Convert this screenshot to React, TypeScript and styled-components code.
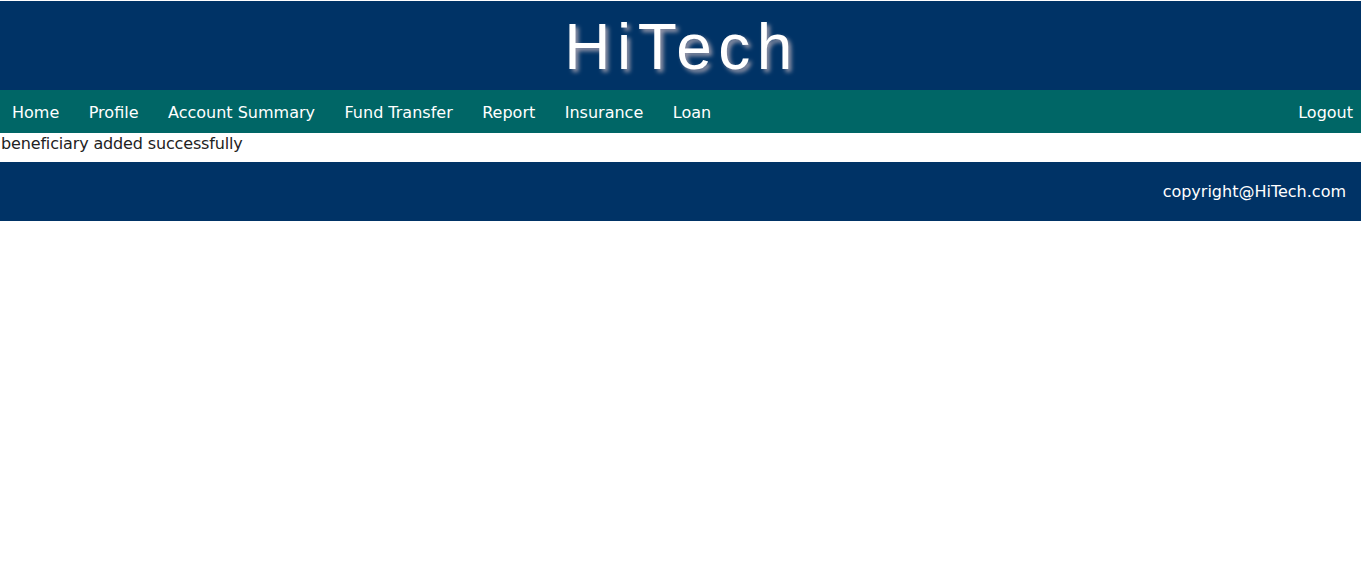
import styled, { createGlobalStyle } from "styled-components";

const GlobalStyle = createGlobalStyle`
  body {
    margin: 0;
    font-family: "DejaVu Sans", Verdana, sans-serif;
    background: white;
  }
`;

const Page = styled.div`
  padding-top: 1px;
`;

const Header = styled.header`
  background-color: #003366;
  height: 89px;
  display: flex;
  align-items: center;
  justify-content: center;
`;

const Title = styled.h1`
  margin: 0 0 0 2px;
  font-family: "Liberation Sans", Arial, sans-serif;
  font-weight: normal;
  font-size: 64px;
  letter-spacing: 6.5px;
  color: white;
  text-shadow: 3px 3px 4px #9999aa;
  position: relative;
  top: 1px;
`;

const NavBar = styled.nav`
  background-color: #006666;
  height: 43px;
  display: flex;
  align-items: center;
`;

const NavLink = styled.a<{ $right?: boolean }>`
  color: white;
  text-decoration: none;
  font-size: 16px;
  padding-left: ${props => (props.$right ? "14px" : "12px")};
  padding-right: ${props => (props.$right ? "8px" : "17.5px")};
  margin-left: ${props => (props.$right ? "auto" : "0")};
  cursor: pointer;
  position: relative;
  top: 1px;
`;

const Message = styled.div`
  height: 29px;
  font-size: 16px;
  letter-spacing: -0.15px;
  color: #222;
  padding-left: 1px;
  line-height: 22px;
`;

const Footer = styled.footer`
  background-color: #003366;
  height: 59px;
  display: flex;
  align-items: center;
  justify-content: flex-end;
  padding-right: 15px;
  color: white;
  font-size: 16px;
`;

const links = ["Home", "Profile", "Account Summary", "Fund Transfer", "Report", "Insurance", "Loan"];

export default function App() {
  return (
    <Page>
      <GlobalStyle />
      <Header>
        <Title>HiTech</Title>
      </Header>
      <NavBar>
        {links.map(l => (
          <NavLink key={l}>{l}</NavLink>
        ))}
        <NavLink $right>Logout</NavLink>
      </NavBar>
      <Message>beneficiary added successfully</Message>
      <Footer>copyright@HiTech.com</Footer>
    </Page>
  );
}
